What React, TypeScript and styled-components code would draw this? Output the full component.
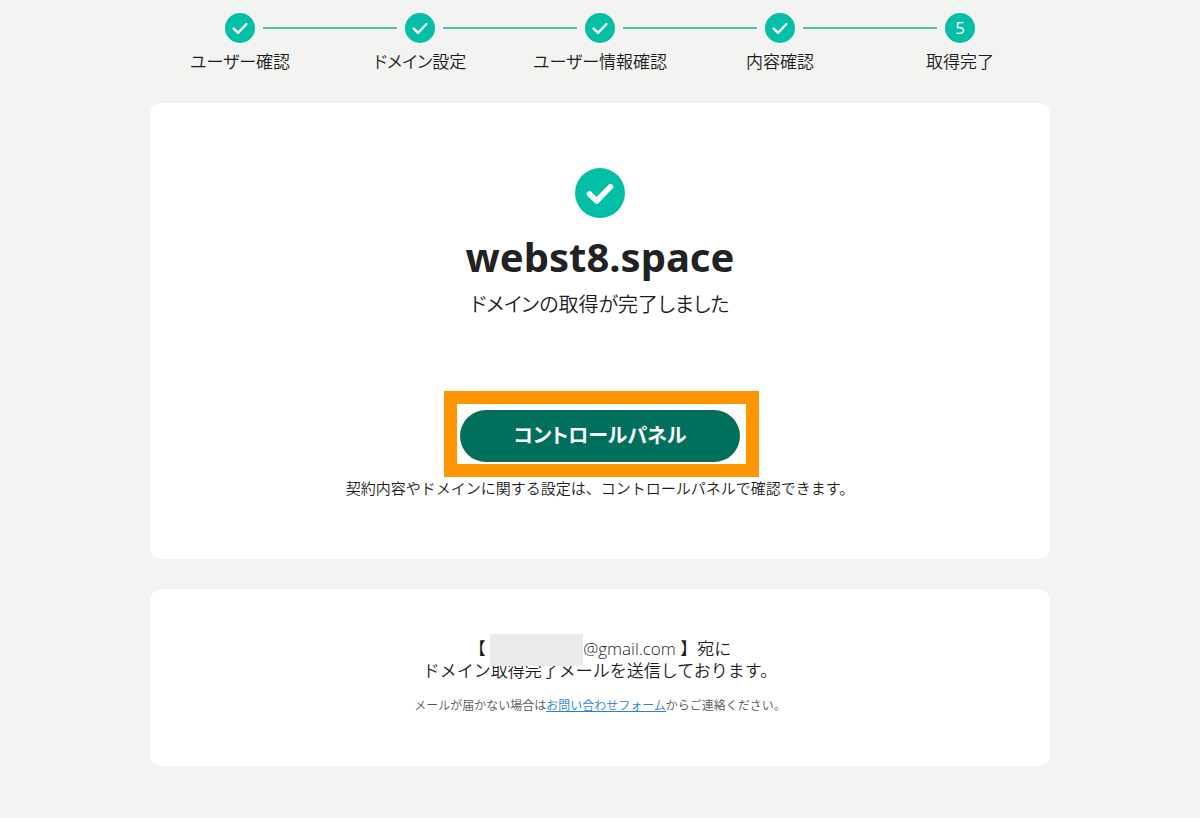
import React from "react";
import styled, { createGlobalStyle } from "styled-components";

const GlobalStyle = createGlobalStyle`
  * { box-sizing: border-box; }
  body {
    margin: 0;
    background: #f3f3f1;
    color: #1c1c1c;
    font-family: "Open Sans", "Noto Sans CJK JP", sans-serif;
    font-size: 17px;
    font-weight: 350;
    line-height: 22px;
  }
  h1, p, ol { margin: 0; padding: 0; }
`;

const Page = styled.main`
  width: 100%;
  max-width: 932px;
  margin: 0 auto;
  padding: 13px 16px 50px;
  display: flex;
  flex-direction: column;
`;

const Steps = styled.ol`
  display: flex;
  list-style: none;
`;

const Step = styled.li`
  flex: 1;
  display: flex;
  flex-direction: column;
  align-items: center;
  gap: 8px;
  white-space: nowrap;
  font-feature-settings: "palt";
`;

const Track = styled.div<{ $first?: boolean; $last?: boolean }>`
  width: 100%;
  display: flex;
  align-items: center;
  gap: 8px;
  &::before, &::after {
    content: "";
    flex: 1;
    height: 2px;
    background: #4fc0a6;
  }
  &::before { visibility: ${(p) => (p.$first ? "hidden" : "visible")}; }
  &::after { visibility: ${(p) => (p.$last ? "hidden" : "visible")}; }
`;

const Badge = styled.span<{ $size: number }>`
  width: ${(p) => p.$size}px;
  height: ${(p) => p.$size}px;
  flex: none;
  display: flex;
  align-items: center;
  justify-content: center;
  border-radius: 50%;
  background: #03bfa6;
  color: #fff;
  font-weight: 400;
`;

const Card = styled.section<{ $padding: string }>`
  margin-top: 30px;
  padding: ${(p) => p.$padding};
  display: flex;
  flex-direction: column;
  align-items: center;
  border-radius: 12px;
  background: #fff;
  text-align: center;
`;

const DomainName = styled.h1`
  margin-top: 11px;
  color: #222;
  font-family: "Noto Sans", sans-serif;
  font-size: 40px;
  line-height: 56px;
  font-weight: 700;
`;

const Lead = styled.p`
  margin-top: 5px;
  font-size: 20px;
  line-height: 30px;
  font-feature-settings: "palt";
`;

const Highlight = styled.div`
  position: relative;
  margin-top: 90px;
  &::after {
    content: "";
    position: absolute;
    inset: -19px -19px -15px -16px;
    border: 13px solid #ff9500;
    pointer-events: none;
  }
`;

const PanelButton = styled.button`
  display: block;
  width: 280px;
  height: 52px;
  padding: 0;
  border: 0;
  border-radius: 26px;
  background: #00705c;
  color: #fff;
  font: inherit;
  font-size: 20px;
  font-weight: 700;
  font-feature-settings: "palt";
  cursor: pointer;
`;

const Note = styled.p`
  margin-top: 15px;
  font-size: 15px;
`;

const MailText = styled.p`
  font-size: 17px;
`;

const Redacted = styled.span`
  position: relative;
  display: inline-block;
  width: 93px;
  height: 22px;
  vertical-align: top;
  &::after {
    content: "";
    position: absolute;
    inset: -4px 0 -6px;
    background: #ebebeb;
  }
`;

const Help = styled.p`
  margin-top: 13px;
  font-size: 12px;
  color: #555;
`;

const Link = styled.a`
  color: #2c7fce;
  text-decoration: underline;
`;

const Check = ({ size, weight }: { size: number; weight: number }) => (
  <svg width={size} height={size} viewBox="0 0 50 50" fill="none" aria-hidden="true">
    <path
      d="M14.5 26 L21.7 33 L35.5 18.7"
      stroke="currentColor"
      strokeWidth={weight}
      strokeLinecap="round"
      strokeLinejoin="round"
    />
  </svg>
);

const steps = ["ユーザー確認", "ドメイン設定", "ユーザー情報確認", "内容確認", "取得完了"];

export default function App() {
  const last = steps.length - 1;
  return (
    <>
      <GlobalStyle />
      <Page lang="ja">
        <Steps>
          {steps.map((label, i) => (
            <Step key={label}>
              <Track $first={i === 0} $last={i === last}>
                <Badge $size={30}>{i === last ? i + 1 : <Check size={30} weight={4} />}</Badge>
              </Track>
              <span>{label}</span>
            </Step>
          ))}
        </Steps>
        <Card $padding="65px 20px 60px">
          <Badge $size={50}>
            <Check size={50} weight={5.5} />
          </Badge>
          <DomainName>webst8.space</DomainName>
          <Lead>ドメインの取得が完了しました</Lead>
          <Highlight>
            <PanelButton type="button">コントロールパネル</PanelButton>
          </Highlight>
          <Note>契約内容やドメインに関する設定は、コントロールパネルで確認できます。</Note>
        </Card>
        <Card $padding="49px 20px 49px">
          <MailText>
            【 <Redacted />
            @gmail.com 】宛に
            <br />
            ドメイン取得完了メールを送信しております。
          </MailText>
          <Help>
            メールが届かない場合は<Link href="#contact">お問い合わせフォーム</Link>からご連絡ください。
          </Help>
        </Card>
      </Page>
    </>
  );
}
